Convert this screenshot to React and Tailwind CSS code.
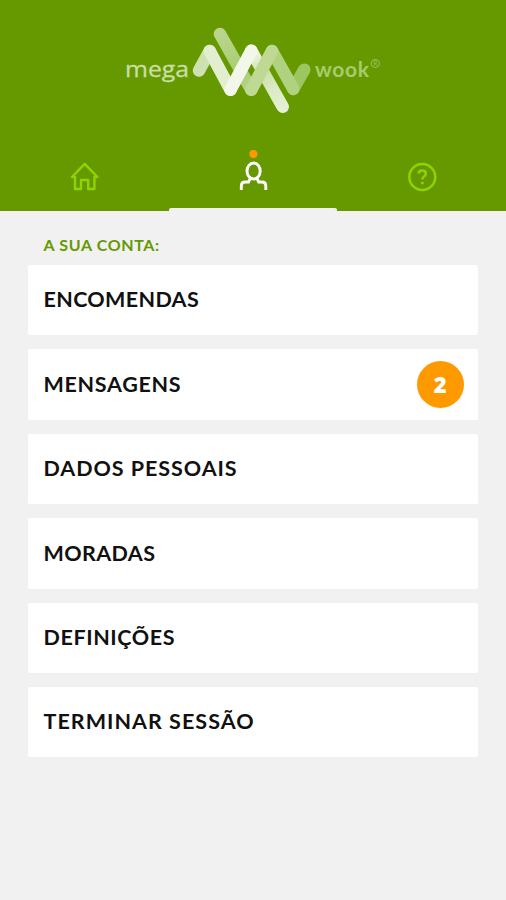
import React, { useState } from 'react';

const menuItems = [
  { id: 'orders', label: 'ENCOMENDAS', tracking: 'tracking-[0.35px]' },
  { id: 'messages', label: 'MENSAGENS', tracking: 'tracking-[0.7px]', count: 2 },
  { id: 'personal', label: 'DADOS PESSOAIS', tracking: 'tracking-[0.95px]' },
  { id: 'addresses', label: 'MORADAS', tracking: 'tracking-[0.4px]' },
  { id: 'settings', label: 'DEFINIÇÕES', tracking: 'tracking-[0.6px]' },
  { id: 'logout', label: 'TERMINAR SESSÃO', tracking: 'tracking-[1.03px]' }
];

const Logo = () => (
  <svg className="block h-[140px] w-[506px]" viewBox="0 0 506 140" fill="none">
    <defs>
      <linearGradient id="tail" gradientUnits="userSpaceOnUse" x1="220" y1="34" x2="251" y2="90">
        <stop offset="0" stopColor="#b9d68b" />
        <stop offset="0.6" stopColor="#aacd73" />
        <stop offset="1" stopColor="#b4d384" />
      </linearGradient>
      <linearGradient id="fall" gradientUnits="userSpaceOnUse" x1="251" y1="51" x2="283" y2="107">
        <stop offset="0" stopColor="#f3f8ec" />
        <stop offset="0.4" stopColor="#cbe0a9" />
        <stop offset="0.7" stopColor="#dcebc6" />
        <stop offset="1" stopColor="#e4efd3" />
      </linearGradient>
    </defs>
    <text x="125" y="76.5" fontFamily="Open Sans, sans-serif" fontSize="22" fill="#c9dfa5" stroke="#c9dfa5" strokeWidth="0.3" textLength="64" lengthAdjust="spacingAndGlyphs">mega</text>
    <g strokeWidth="12.5" strokeLinecap="round">
      <path d="M220 34L251.3 89.7" stroke="url(#tail)" />
      <path d="M251.3 50.7L282.7 106.7" stroke="url(#fall)" />
      <path d="M304.3 69.7L293.3 88.9" stroke="#9cc660" />
      <path d="M293.3 88.9L272 51" stroke="#b0d17e" />
      <path d="M272 51L251.3 89.7" stroke="#bfd994" />
      <path d="M199 70.5L209.7 51" stroke="#cde2b0" />
      <path d="M209.7 51L230.5 89.7" stroke="#e3eed1" />
      <path d="M230.5 89.7L251.3 50.7" stroke="#f2f7ea" />
    </g>
    <text x="315" y="76.5" fontFamily="Lato, sans-serif" fontSize="21" fontWeight="700" fill="#a6cc6d" textLength="54">wook</text>
    <circle cx="375.3" cy="63.5" r="4" stroke="#8fbc4b" strokeWidth="1.2" />
    <text x="375.3" y="66" textAnchor="middle" fontFamily="Lato, sans-serif" fontSize="6.5" fontWeight="700" fill="#8fbc4b">R</text>
  </svg>
);

const HomeIcon = () => (
  <svg className="h-11 w-10" viewBox="65 148 40 44" fill="none" stroke="#8fd300" strokeWidth="2.4" strokeLinecap="round" strokeLinejoin="round">
    <path d="M76 177H73L85.7 163.8L98.4 177H95.4V189H89.2V180H82V189H76Z" />
  </svg>
);

const UserIcon = () => (
  <svg className="h-11 w-10" viewBox="233 148 40 44" fill="none">
    <circle cx="253.4" cy="154" r="4" fill="#ff9900" />
    <g stroke="#fff" strokeWidth="2.9">
      <ellipse cx="253.6" cy="171" rx="6.6" ry="8" />
      <path d="M241.3 190V186Q241.3 182 245.3 182H248.5L250.3 178.4M256.9 178.4L258.7 182H261.8Q265.8 182 265.8 186V190" />
    </g>
  </svg>
);

const HelpIcon = () => (
  <svg className="h-11 w-10" viewBox="402 148 40 44" fill="none" stroke="#8fd300">
    <circle cx="422.3" cy="177" r="13" strokeWidth="2.5" />
    <path d="M418.6 173.6Q418.8 170.6 422.2 170.6Q425.8 170.6 425.8 173.8Q425.8 175.4 424 176.5Q422.3 177.5 422.3 179.5" strokeWidth="2.5" />
    <circle cx="422.3" cy="183" r="1.5" fill="#8fd300" stroke="none" />
  </svg>
);

const tabs = [
  { id: 'home', name: 'Início', Icon: HomeIcon },
  { id: 'account', name: 'Conta', Icon: UserIcon },
  { id: 'help', name: 'Ajuda', Icon: HelpIcon }
];

const App = () => {
  const [activeTab, setActiveTab] = useState('account');

  return (
    <div className="h-[900px] w-[506px] overflow-hidden bg-[#f1f1f1] font-['Lato',sans-serif]">
      <header className="h-[211px] bg-[#669900]">
        <Logo />
        <nav className="grid h-[71px] grid-cols-3">
          {tabs.map(({ id, name, Icon }) => (
            <button
              key={id}
              aria-label={name}
              onClick={() => setActiveTab(id)}
              className="flex flex-col items-center justify-between pt-2"
            >
              <Icon />
              {activeTab === id && <span className="h-[3px] w-full rounded-t-xs bg-[#f1f1f1]" />}
            </button>
          ))}
        </nav>
      </header>

      <main className="pr-7 pl-[27.5px]">
        <h1 className="flex h-[54px] items-center pt-[13px] pl-4 text-[16px] font-bold tracking-[0.65px] text-[#669900]">
          A SUA CONTA:
        </h1>
        <ul className="flex flex-col gap-[14px]">
          {menuItems.map((item) => (
            <li
              key={item.id}
              className="flex h-[70.4px] items-center justify-between rounded-xs bg-white pr-[14px] pl-4"
            >
              <span className={`text-[21.5px] leading-none font-bold text-[#111] ${item.tracking}`}>
                {item.label}
              </span>
              {item.count && (
                <span className="flex size-[47.5px] items-center justify-center rounded-full bg-[#ff9900] font-['Open_Sans',sans-serif] text-[22px] font-extrabold text-white">
                  {item.count}
                </span>
              )}
            </li>
          ))}
        </ul>
      </main>
    </div>
  );
};

export default App;
